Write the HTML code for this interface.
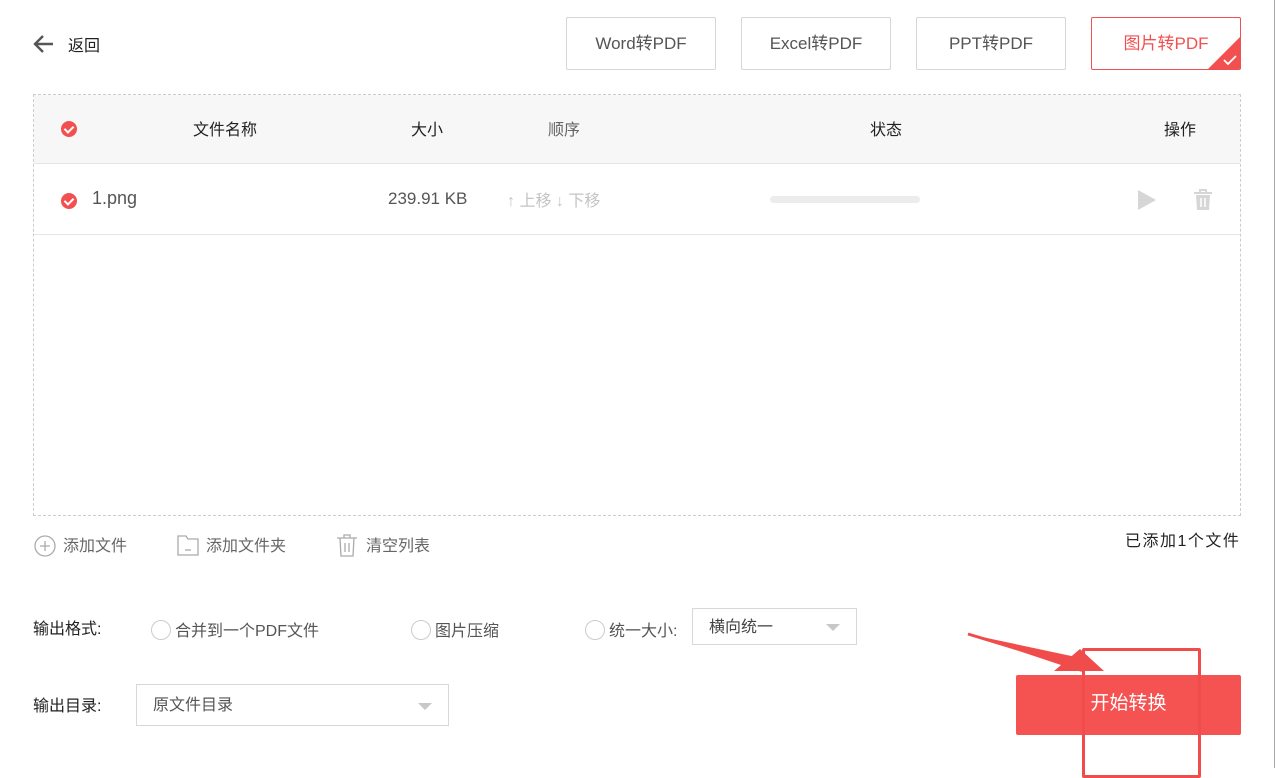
<!DOCTYPE html>
<html><head><meta charset="utf-8"><style>
*{box-sizing:border-box;margin:0;padding:0}
body{width:1276px;height:768px;background:#fff;position:relative;overflow:hidden;font-family:"Liberation Sans","Noto Sans CJK SC",sans-serif;color:#333}
.a{position:absolute}
.tab{position:absolute;top:17px;width:150px;height:53px;border:1px solid #d6d6d6;border-radius:2px;font-size:17px;color:#555;text-align:center;line-height:51px}
.chk{position:absolute;width:16px;height:16px;border-radius:50%;background:#f25050}
.chk:after{content:"";position:absolute;left:5px;top:3px;width:4px;height:7px;border:solid #fff;border-width:0 2px 2px 0;transform:rotate(45deg)}
.radio{display:inline-block;width:20px;height:20px;border:1px solid #ccc;border-radius:50%;vertical-align:-4px;margin-right:4px}
.sel{position:absolute;border:1px solid #d8d8d8;background:#fff;font-size:16px;color:#444}
.tri{position:absolute;width:0;height:0;border-left:7px solid transparent;border-right:7px solid transparent;border-top:7px solid #c8c8c8}
</style></head><body>
<div class="a" style="right:1px;top:0;width:1px;height:768px;background:#aaa"></div>
<svg class="a" style="left:33px;top:34px" width="22" height="20" viewBox="0 0 22 20"><path d="M20 10H3M10 2L2 10l8 8" fill="none" stroke="#555" stroke-width="2.4"/></svg>
<div class="a" style="left:68px;top:32px;font-size:16px;color:#222">返回</div>
<div class="tab" style="left:566px">Word转PDF</div>
<div class="tab" style="left:741px">Excel转PDF</div>
<div class="tab" style="left:916px">PPT转PDF</div>
<div class="tab" style="left:1091px;border-color:#f25050;color:#f25050;overflow:hidden">图片转PDF
<div class="a" style="right:0;bottom:0;width:0;height:0;border-left:32px solid transparent;border-bottom:32px solid #f25050"></div>
<svg class="a" style="right:3px;bottom:4px" width="14" height="10"><path d="M1 5l4 4 8-8" fill="none" stroke="#fff" stroke-width="1.8"/></svg></div>
<div class="a" style="left:33px;top:94px;width:1208px;height:422px;border:1px dashed #ccc"></div>
<div class="a" style="left:34px;top:95px;width:1206px;height:69px;background:#f7f7f7;border-bottom:1px solid #e5e5e5"></div>
<div class="chk" style="left:61px;top:121px"></div>
<div class="a" style="left:193px;top:116px;font-size:16px;color:#222">文件名称</div>
<div class="a" style="left:411px;top:116px;font-size:16px;color:#222">大小</div>
<div class="a" style="left:548px;top:116px;font-size:16px;color:#666">顺序</div>
<div class="a" style="left:870px;top:116px;font-size:16px;color:#222">状态</div>
<div class="a" style="left:1164px;top:116px;font-size:16px;color:#222">操作</div>
<div class="a" style="left:34px;top:234px;width:1206px;height:1px;background:#e5e5e5"></div>
<div class="chk" style="left:61px;top:193px"></div>
<div class="a" style="left:92px;top:188px;font-size:18px;color:#555">1.png</div>
<div class="a" style="left:388px;top:189px;font-size:17px;color:#555">239.91 KB</div>
<div class="a" style="left:507px;top:187px;font-size:16px;color:#c4c4c4">↑ 上移 ↓ 下移</div>
<div class="a" style="left:770px;top:196px;width:150px;height:7px;border-radius:4px;background:#ececec"></div>
<div class="a" style="left:1138px;top:190px;width:0;height:0;border-top:10px solid transparent;border-bottom:10px solid transparent;border-left:18px solid #d6d6d6"></div>
<svg class="a" style="left:1193px;top:189px" width="20" height="22" viewBox="0 0 20 22"><path d="M1 4h18M7 4V1h6v3" stroke="#d6d6d6" stroke-width="2" fill="none"/><path d="M3 6h14l-1 15H4z" fill="#d6d6d6"/><path d="M8 9v9M12 9v9" stroke="#fff" stroke-width="1.5"/></svg>
<svg class="a" style="left:34px;top:535px" width="22" height="22"><circle cx="11" cy="11" r="10" fill="none" stroke="#aaa" stroke-width="1.3"/><path d="M11 6v10M6 11h10" stroke="#aaa" stroke-width="1.3"/></svg>
<div class="a" style="left:63px;top:532px;font-size:16px;color:#666">添加文件</div>
<svg class="a" style="left:177px;top:535px" width="22" height="21"><path d="M1 1h8l2 3h10v16H1z" fill="none" stroke="#aaa" stroke-width="1.3"/><path d="M8 15h6" stroke="#aaa" stroke-width="1.3"/></svg>
<div class="a" style="left:206px;top:532px;font-size:16px;color:#666">添加文件夹</div>
<svg class="a" style="left:336px;top:534px" width="22" height="23"><path d="M1 4h20M8 4V1h6v3M4 4l1 18h12l1-18M9 9v9M13 9v9" fill="none" stroke="#aaa" stroke-width="1.3"/></svg>
<div class="a" style="left:366px;top:532px;font-size:16px;color:#666">清空列表</div>
<div class="a" style="left:1125px;top:527px;font-size:16px;color:#222;letter-spacing:1.5px">已添加1个文件</div>
<div class="a" style="left:33px;top:615px;font-size:16px;color:#222">输出格式:</div>
<div class="a" style="left:151px;top:617px;font-size:16px;color:#555"><span class="radio"></span>合并到一个PDF文件</div>
<div class="a" style="left:411px;top:617px;font-size:16px;color:#555"><span class="radio"></span>图片压缩</div>
<div class="a" style="left:585px;top:617px;font-size:16px;color:#555"><span class="radio"></span>统一大小:</div>
<div class="sel" style="left:692px;top:608px;width:165px;height:37px;line-height:37px;padding-left:16px">横向统一<div class="tri" style="right:16px;top:15px"></div></div>
<div class="a" style="left:33px;top:692px;font-size:16px;color:#222">输出目录:</div>
<div class="sel" style="left:136px;top:684px;width:313px;height:42px;line-height:42px;padding-left:16px;color:#555">原文件目录<div class="tri" style="right:16px;top:18px"></div></div>
<div class="a" style="left:1016px;top:675px;width:225px;height:60px;background:#f55252;border-radius:2px;color:#fff;font-size:19px;text-align:center;line-height:58px">开始转换</div>
<div class="a" style="left:1082px;top:648px;width:119px;height:130px;border:3px solid #f04c4c;border-radius:2px"></div>
<svg class="a" style="left:960px;top:625px" width="160" height="60"><path d="M8 9L122 47l-6-15 z" fill="#f04c4c"/><path d="M8 9l116 35" stroke="#f04c4c" stroke-width="3"/><path d="M94 46l50 0-24-22z" fill="#f04c4c"/></svg>
</body></html>
